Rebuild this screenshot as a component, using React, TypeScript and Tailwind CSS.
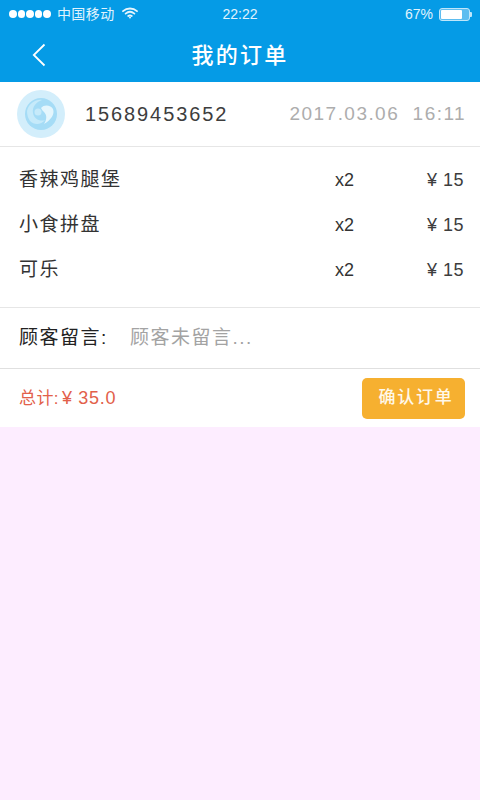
const FONT = "font-['Liberation_Sans','Noto_Sans_CJK_SC',sans-serif]";

const ITEMS = [
  { name: "香辣鸡腿堡", count: "x2", price: "¥ 15" },
  { name: "小食拼盘", count: "x2", price: "¥ 15" },
  { name: "可乐", count: "x2", price: "¥ 15" },
];

function Wifi() {
  return (
    <svg width="16" height="12" viewBox="0 0 16 12" className="ml-[7px] mb-[3px]" fill="none" stroke="#e6f5fd" strokeLinecap="round">
      <path d="M1 4.2C5 .6 11 .6 15 4.2" strokeWidth="1.8" />
      <path d="M3.6 6.6c2.6-2.2 6.2-2.2 8.8 0" strokeWidth="1.8" />
      <path d="M6.2 9c1.1-.8 2.5-.8 3.6 0" strokeWidth="1.8" />
      <circle cx="8" cy="10.6" r="1" fill="#e6f5fd" stroke="none" />
    </svg>
  );
}

function Battery() {
  return (
    <div className="flex items-center">
      <div className="w-[31px] h-[13px] rounded-[3px] border border-[#bfe6fa] p-[1px] bg-[#5dbdf0]">
        <div className="w-[21px] h-full bg-white rounded-[1px]" />
      </div>
      <div className="w-[2px] h-[5px] bg-[#bfe6fa] rounded-r-[1px]" />
    </div>
  );
}

function Avatar() {
  return (
    <div className="w-[48px] h-[48px] rounded-full bg-[#d3eefb] flex items-center justify-center">
      <svg width="34" height="34" viewBox="0 0 34 34">
        <circle cx="17" cy="17" r="16" fill="#a5dcf6" />
        <path d="M3 14C5 6 12 2 18 3c-6 2-10 7-9 13 1 6 7 9 12 7-4 5-11 5-15 1-2-3-3-6-3-10z" fill="#c6eafa" />
        <path d="M17 11c3-4 10-3 12 1 2 5-2 11-9 15 3-5 3-9 0-12-1-1-2-2-3-4z" fill="#e4f6fd" />
        <circle cx="14" cy="15" r="3.5" fill="#c6eafa" />
      </svg>
    </div>
  );
}

export default function App() {
  return (
    <div className={`${FONT} w-[480px] h-[800px] bg-[#fdedff] flex flex-col`}>
      {/* Header */}
      <div className="h-[82px] bg-[#059be6] text-white">
        <div className="h-[28px] relative flex items-center pl-[9px] pr-[8px] text-[14px] text-[#e0f3fd]">
          <div className="flex gap-[1px]">
            <span className="w-[7.6px] h-[7.6px] rounded-full bg-white" />
            <span className="w-[7.6px] h-[7.6px] rounded-full bg-white" />
            <span className="w-[7.6px] h-[7.6px] rounded-full bg-white" />
            <span className="w-[7.6px] h-[7.6px] rounded-full bg-white" />
            <span className="w-[7.6px] h-[7.6px] rounded-full bg-white" />
          </div>
          <span className="ml-[6px] tracking-[0.4px]">中国移动</span>
          <Wifi />
          <span className="absolute left-0 right-0 text-center">22:22</span>
          <span className="ml-auto mr-[6px]">67%</span>
          <Battery />
        </div>
        <div className="h-[54px] flex items-center relative">
          <svg width="16" height="24" viewBox="0 0 16 24" fill="none" stroke="white" strokeWidth="1.8" className="ml-[31px]">
            <path d="M13.5 1.5 2.8 12l10.7 10.5" />
          </svg>
          <span className="absolute left-0 right-0 text-center text-[22px] font-medium tracking-[2.2px]">我的订单</span>
        </div>
      </div>

      {/* Customer */}
      <div className="h-[65px] bg-white flex items-center pl-[17px] pr-[14px] border-b border-[#e6e6e6]">
        <Avatar />
        <span className="ml-[20px] text-[20px] tracking-[1.9px] text-[#3d3d3d]">15689453652</span>
        <span className="ml-auto text-[19px] tracking-[1.45px] text-[#adadad] whitespace-pre">2017.03.06  16:11</span>
      </div>

      {/* Items */}
      <div className="h-[161px] bg-white border-b border-[#e6e6e6] pt-[11px] pl-[19px] pr-[16px]">
        {ITEMS.map((item) => (
          <div key={item.name} className="h-[45px] flex items-center text-[#333333]">
            <span className="w-[316px] text-[19px] tracking-[1.5px]">{item.name}</span>
            <span className="text-[18px]">{item.count}</span>
            <span className="ml-auto text-[18px] tracking-[0.5px] text-[#3d3d3d]">{item.price}</span>
          </div>
        ))}
      </div>

      {/* Message */}
      <div className="h-[61px] bg-white border-b border-[#e0e0e0] flex items-center pl-[19px]">
        <span className="text-[19px] tracking-[1.5px] text-[#222222] w-[111px]">顾客留言:</span>
        <span className="text-[19px] tracking-[1.5px] text-[#a3a3a3]">顾客未留言...</span>
      </div>

      {/* Total */}
      <div className="h-[58px] bg-white flex items-center pl-[19px] pr-[15px]">
        <span className="text-[#e2604a] text-[17px] tracking-[0.4px] mt-[1px]">
          总计:<span className="ml-[3px] text-[18px] tracking-[0.7px]">¥ 35.0</span>
        </span>
        <button className="ml-auto w-[103px] h-[41px] pl-[5px] rounded-[5px] bg-[#f6b030] text-[#fff8ea] text-[17px] tracking-[1.8px] font-medium">
          确认订单
        </button>
      </div>
    </div>
  );
}
